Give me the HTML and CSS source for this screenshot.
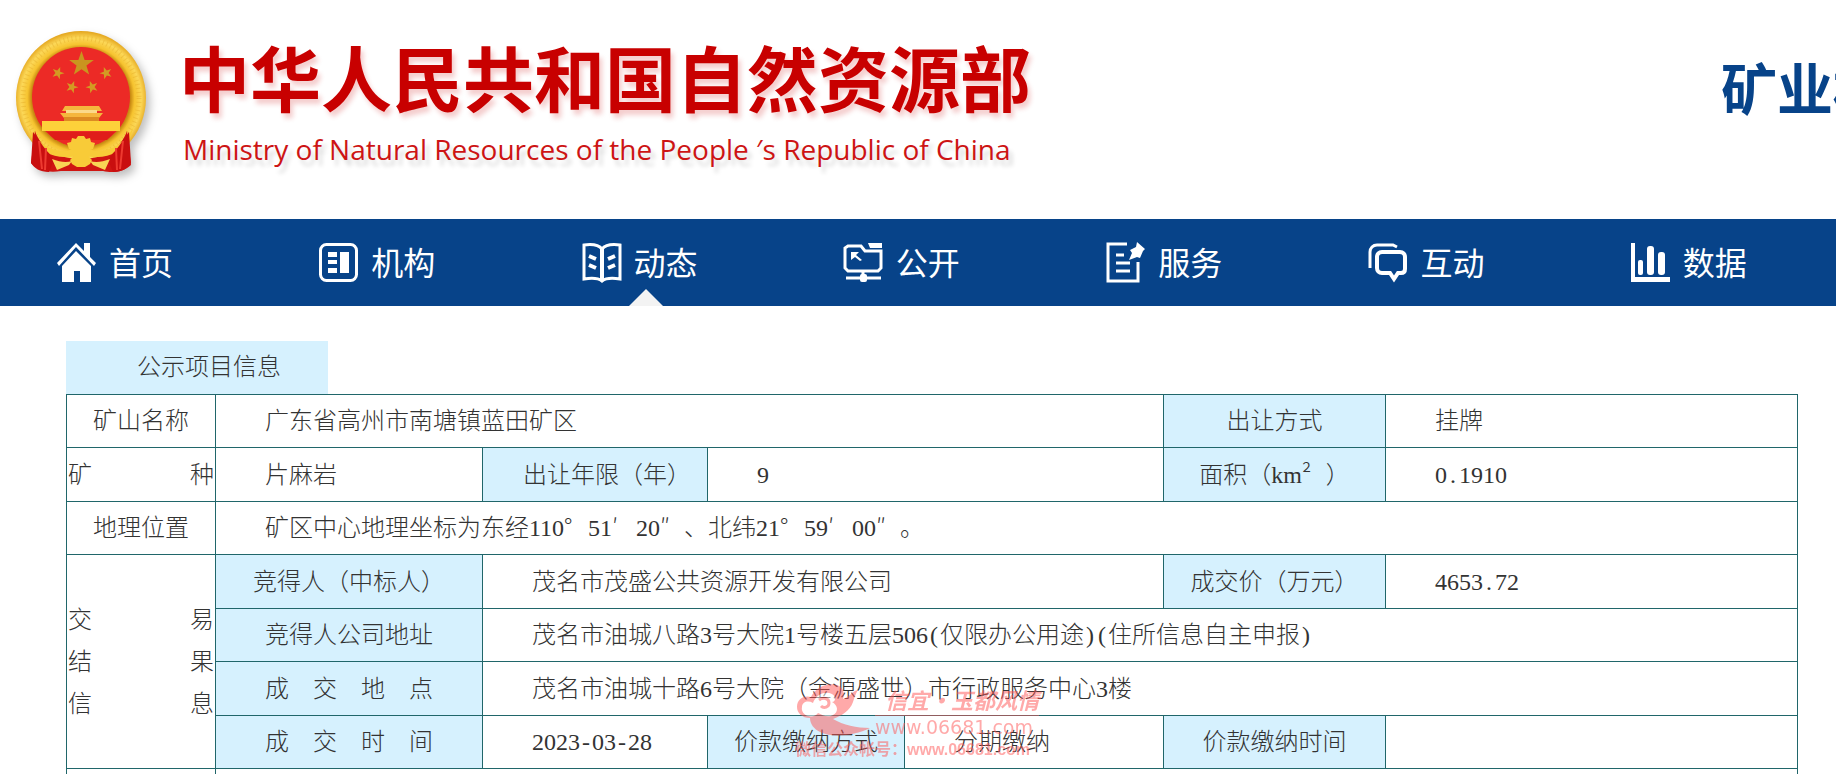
FILE: index.html
```html
<!DOCTYPE html>
<html lang="zh-CN">
<head>
    <meta charset="UTF-8">
    <meta name="viewport" content="width=device-width, initial-scale=1.0">
    <title>中华人民共和国自然资源部</title>
    <link rel="stylesheet" href="styles.css">
</head>
<body>

    <header class="header">
        <svg class="emblem" viewBox="0 0 132 142" aria-hidden="true">
            <defs>
                <radialGradient id="gold" gradientUnits="userSpaceOnUse" cx="66" cy="67" r="67">
                    <stop offset="0.74" stop-color="#c98a12"/>
                    <stop offset="0.8" stop-color="#f6c32f"/>
                    <stop offset="0.9" stop-color="#fcd858"/>
                    <stop offset="1" stop-color="#e3a41c"/>
                </radialGradient>
                <path id="star" d="M0-10 2.4-3.1 9.5-3.1 3.8 1.2 5.9 8.1 0 4 -5.9 8.1 -3.8 1.2 -9.5-3.1 -2.4-3.1z"/>
            </defs>
            <ellipse cx="66" cy="67" rx="65" ry="67" fill="url(#gold)"/>
            <ellipse cx="66" cy="67" rx="58" ry="60" fill="none" stroke="#d99a1a" stroke-width="5" stroke-dasharray="1 3" opacity=".3"/>
            <path d="M20 100C26 118 44 128 66 128s40-10 46-28l4 34c-8 8-20 8-28 6H46c-12 2-22 0-30-8z" fill="#cf1512"/>
            <ellipse cx="66" cy="66" rx="49" ry="50" fill="#ec2a26"/>
            <use href="#star" transform="translate(66.500 33) scale(1.3)" fill="#c9951f"/>
            <g fill="#d39a23">
                <use href="#star" transform="translate(43 42) scale(.65) rotate(20)"/>
                <use href="#star" transform="translate(91 42) scale(.65) rotate(-20)"/>
                <use href="#star" transform="translate(57 56) scale(.65) rotate(20)"/>
                <use href="#star" transform="translate(77 56) scale(.65) rotate(-20)"/>
            </g>
            <path d="M50 75h34l3 5H47zM45 82h43l-4 5H49z" fill="#f5b63d"/>
            <path d="M51 79h31v3H51z" fill="#fbd98a"/>
            <path d="M49 86h35v4H49z" fill="#dc8b22"/>
            <path d="M27 90h78v10H27z" fill="#fdd13a"/>
            <path d="M32 101h68l-8 8H40z" fill="#e01d1a"/>
            <path d="M12 92c8 20 24 29 40 28 5-1 8-5 14-5s9 4 14 5c16 1 32-8 40-28l-5 15c-8 13-20 20-36 19-5 0-8-2-13-2s-8 2-13 2c-16 1-28-6-36-19z" fill="#f8cb38"/>
            <path d="M52 112l4-1 1-4 4 1 2-3h6l2 3 4-1 1 4 4 1-2 6-12 4-12-4z" fill="#f8cb38"/>
            <path d="M18 101l10 14c5 7 12 12 10 16l-4 10c-9 0-15-4-18-9z" fill="#c90f0f"/>
            <path d="M114 101l-10 14c-5 7-12 12-10 16l4 10c9 0 15-4 18-9z" fill="#c90f0f"/>
            <path d="M24 110l3 28M31 117l-1 22M108 110l-3 28M101 117l1 22" stroke="#ee3a30" stroke-width="2" fill="none"/>
            <path d="M55 129l5-5h12l5 5-2 4-5 3h-8l-5-3z" fill="#f8cb38"/>
            <path d="M37 128c8 3 14 4 20 2l-3 4-12 5zM95 128c-8 3-14 4-20 2l3 4 12 5z" fill="#f9d455"/>
        </svg>
        <div class="brand">
            <h1 class="brand-cn">中华人民共和国自然资源部</h1>
            <p class="brand-en">Ministry of Natural Resources of the People ′s Republic of China</p>
        </div>
        <div class="site-title">矿业权市场</div>
    </header>

    <nav class="nav">
        <a class="nav-item" href="#">
            <svg class="nav-icon" viewBox="0 0 39 39" fill="#fff">
                <path d="M19 0 27 8V0h6v14l6 6-2 3L19 4 2 23l-2-3z"/>
                <path d="M19 8 34 23v16H23V28h-6v11H5V23z"/>
            </svg>
            <span class="nav-text">首页</span>
        </a>
        <a class="nav-item" href="#">
            <svg class="nav-icon" viewBox="0 0 39 39" fill="#fff">
                <rect x="1.500" y="1.500" width="36" height="36" rx="6" fill="none" stroke="#fff" stroke-width="3"/>
                <path d="M9 9h9v5H9zM9 17h9v4H9zM9 25h9v5H9zM21 9h9v21h-9z"/>
            </svg>
            <span class="nav-text">机构</span>
        </a>
        <a class="nav-item active" href="#">
            <svg class="nav-icon" viewBox="0 0 39 39" fill="none" stroke="#fff" stroke-width="3">
                <path d="M20 6C16 1 9 1 2 2v34c6-1 13-2 18 2 5-4 12-3 18-2V2C31 1 24 1 20 6z"/>
                <path d="M20 6v32" stroke-width="4"/>
                <path d="M7 13l7 3M7 22l7 3M33 13l-7 3M33 22l-7 3" stroke-width="4"/>
            </svg>
            <span class="nav-text">动态</span>
        </a>
        <a class="nav-item" href="#">
            <svg class="nav-icon" viewBox="0 0 39 39" fill="none" stroke="#fff" stroke-width="3">
                <path d="M4 3h13l4 5h16v17l-3 3H4l-3-3V5z"/>
                <path d="M24 0h14v5H26z" fill="#fff" stroke="none"/>
                <path d="M7 9h8l-3 3 6 5-2 1-5-4-4 3z" fill="#fff" stroke="none"/>
                <path d="M19 28v7M2 35h35"/>
                <rect x="16" y="31" width="7" height="8" rx="2" fill="#fff" stroke="none"/>
            </svg>
            <span class="nav-text">公开</span>
        </a>
        <a class="nav-item" href="#">
            <svg class="nav-icon" viewBox="0 0 39 39" fill="none" stroke="#fff" stroke-width="3">
                <path d="M21 1H2v37h30V19"/>
                <path d="M10 12h8M10 20h14M10 28h14"/>
                <path d="M31 -1l8 7-2 2-3 7-3-1-8 3 3-7-2-3 6-3z" fill="#fff" stroke="none"/>
            </svg>
            <span class="nav-text">服务</span>
        </a>
        <a class="nav-item" href="#">
            <svg class="nav-icon" viewBox="0 0 39 39" fill="none" stroke="#fff" stroke-width="3">
                <path d="M2 25V9c0-4 3-7 7-7h16l4 2"/>
                <path d="M14 9h18c3 0 5 2 5 5v12c0 3-2 4-4 4h-3l-4 6-4-6h-8c-3 0-5-2-5-5V14c0-3 2-5 5-5z" stroke-width="4"/>
            </svg>
            <span class="nav-text">互动</span>
        </a>
        <a class="nav-item" href="#">
            <svg class="nav-icon" viewBox="0 0 39 39" fill="#fff">
                <path d="M0 0h4v34h35v5H0z"/>
                <rect x="7" y="17" width="5" height="15" rx="2"/>
                <rect x="16" y="3" width="7" height="29" rx="3"/>
                <rect x="27" y="9" width="7" height="23" rx="3"/>
            </svg>
            <span class="nav-text">数据</span>
        </a>
    </nav>

    <main class="content">
        <h2 class="tab">公示项目信息</h2>
        <table class="info-table">
            <colgroup>
                <col class="col-name">
                <col class="col-a">
                <col class="col-b">
                <col class="col-c">
                <col class="col-d">
                <col class="col-e">
                <col>
            </colgroup>
            <tr>
                <th class="plain">矿山名称</th>
                <td colspan="4">广东省高州市南塘镇蓝田矿区</td>
                <th>出让方式</th>
                <td>挂牌</td>
            </tr>
            <tr>
                <th class="plain spread">矿 种</th>
                <td>片麻岩</td>
                <th class="shift">出让年限（年）</th>
                <td colspan="2">9</td>
                <th>面积（km<span class="wide">²</span>）</th>
                <td>0<span class="half">.</span>1910</td>
            </tr>
            <tr>
                <th class="plain">地理位置</th>
                <td colspan="6">矿区中心地理坐标为东经110<span class="wide">°</span>51<span class="wide">′</span>20<span class="wide">″</span>、北纬21<span class="wide">°</span>59<span class="wide">′</span>00<span class="wide">″</span>。</td>
            </tr>
            <tr>
                <th class="plain spread" rowspan="4">交 易<br>结 果<br>信 息</th>
                <th>竞得人（中标人）</th>
                <td colspan="3">茂名市茂盛公共资源开发有限公司</td>
                <th>成交价（万元）</th>
                <td>4653<span class="half">.</span>72</td>
            </tr>
            <tr>
                <th>竞得人公司地址</th>
                <td colspan="5">茂名市油城八路3号大院1号楼五层506<span class="half">(</span>仅限办公用途<span class="half">)</span><span class="half">(</span>住所信息自主申报<span class="half">)</span></td>
            </tr>
            <tr>
                <th>成　交　地　点</th>
                <td colspan="5">茂名市油城十路6号大院（金源盛世）市行政服务中心3楼</td>
            </tr>
            <tr>
                <th>成　交　时　间</th>
                <td>2023<span class="half">-</span>03<span class="half">-</span>28</td>
                <th>价款缴纳方式</th>
                <td>分期缴纳</td>
                <th>价款缴纳时间</th>
                <td></td>
            </tr>
            <tr>
                <th class="plain"></th>
                <td colspan="6"></td>
            </tr>
        </table>

        <div class="watermark">
            <div class="wm-top">
                <svg class="wm-logo" viewBox="0 0 80 54" aria-hidden="true">
                    <path d="M2 24c0-8 7-12 14-10 4-9 16-15 26-12 6 2 8 8 6 14 7-2 9-8 15-9-2 3-3 6-5 12-3 9-12 14-20 17 10 6 24 9 37 9-16 8-38 10-50 4-6-3-10-8-10-14C7 35 2 30 2 24z" fill="currentColor"/>
                    <path d="M7 24c0-5 6-7 11-4 2-7 11-13 19-9 4 2 4 8 0 8 6 3 7 10 1 13-5 3-11 0-15-2-2 3-6 4-10 3-4-1-7-5-6-9z" fill="#fff"/>
                    <path d="M24 17c4-3 10-2 10 3 0 4-5 6-8 3" fill="none" stroke="currentColor" stroke-width="3"/>
                </svg>
                <div class="wm-text">
                    <div class="wm-name">信宜·玉都风情</div>
                    <div class="wm-url">www.06681.com</div>
                </div>
            </div>
            <div class="wm-account">微信公众帐号：www.06681.com</div>
        </div>
    </main>

</body>
</html>
```
FILE: styles.css
```css
* {
    box-sizing: border-box;
}

body {
    margin: 0;
    height: 100vh;
    overflow: hidden;
    background-color: #fff;
    font-family: "Liberation Serif", "Noto Sans CJK SC", serif;
    color: #333;
}

.header {
    display: flex;
    height: 219px;
    padding: 31px 0 0 15px;
}

.emblem {
    flex: none;
    width: 132px;
    height: 142px;
    filter: drop-shadow(4px 5px 4px rgba(0, 0, 0, 0.25));
}

.brand {
    margin-left: 32px;
    white-space: nowrap;
}

.brand-cn {
    margin: 0;
    font-family: "Noto Sans CJK SC", sans-serif;
    font-size: 71px;
    font-weight: 700;
    line-height: 88px;
    color: #c80000;
    text-shadow: 3px 5px 5px rgba(200, 0, 0, 0.2);
}

.brand-en {
    margin: 0;
    padding-left: 4px;
    font-family: "Open Sans", "Noto Sans CJK SC", sans-serif;
    font-size: 28px;
    line-height: 60px;
    color: #cd1414;
    text-shadow: 4px 6px 4px rgba(0, 0, 0, 0.15);
}

.site-title {
    width: 115px;
    margin: 20px 0 0 auto;
    overflow: hidden;
    font-family: "Noto Sans CJK SC", sans-serif;
    font-size: 56px;
    font-weight: 700;
    line-height: 70px;
    color: #074389;
    white-space: nowrap;
}

/* 导航 */
.nav {
    display: flex;
    height: 87px;
    background-color: #074389;
}

.nav-item {
    position: relative;
    flex: 1;
    display: flex;
    align-items: center;
    gap: 13px;
    padding-left: 57px;
    font-family: "Noto Sans CJK SC", sans-serif;
    font-size: 32px;
    color: #fff;
    text-decoration: none;
}

.nav-icon {
    width: 39px;
    height: 39px;
    overflow: visible;
}

.nav-text {
    padding-bottom: 4px;
}

.nav-item.active::after {
    content: "";
    position: absolute;
    left: 104px;
    bottom: 0;
    border: 17px solid transparent;
    border-top: 0;
    border-bottom-color: #f3f3f3;
}

/* 公示表格 */
.content {
    position: relative;
    padding: 35px 38px 0 66px;
}

.tab {
    width: 262px;
    margin: 0;
    padding-left: 24px;
    background-color: #d6f1fe;
    font-size: 24px;
    font-weight: 300;
    line-height: 53px;
    text-align: center;
}

.info-table {
    width: 100%;
    table-layout: fixed;
    border-collapse: collapse;
    font-size: 24px;
    font-weight: 300;
    line-height: 42px;
}

.info-table tr {
    height: 53px;
}

.info-table tr:nth-child(even) {
    height: 54px;
}

.info-table th,
.info-table td {
    padding: 0;
    border: 1px solid #20666a;
    font-weight: 300;
    white-space: nowrap;
}

.info-table th {
    background-color: #d6f1fe;
    text-align: center;
}

.info-table td {
    padding-left: 49px;
    text-align: left;
}

.info-table .plain {
    background-color: #fff;
}

.info-table .spread {
    padding: 0 1px;
    text-align: justify;
    text-align-last: justify;
    white-space: normal;
}

.info-table .shift {
    padding-left: 24px;
}

/* 全角、半角符号 */
.wide {
    display: inline-block;
    width: 24px;
    font-family: "Noto Sans CJK SC", sans-serif;
    line-height: 24px;
    text-align: left;
}

.half {
    display: inline-block;
    width: 12px;
    line-height: 24px;
    text-align: center;
}

.col-name { width: 149px; }
.col-a { width: 267px; }
.col-b { width: 225px; }
.col-c { width: 197px; }
.col-d { width: 259px; }
.col-e { width: 222px; }

/* 水印 */
.watermark {
    position: absolute;
    left: 795px;
    top: 377px;
    font-family: "Noto Sans CJK SC", sans-serif;
    color: #f55;
    opacity: 0.5;
    white-space: nowrap;
}

.wm-top {
    display: flex;
}

.wm-logo {
    width: 80px;
    height: 54px;
}

.wm-name {
    padding-left: 10px;
    border-bottom: 1px solid #f55;
    font-size: 22px;
    font-weight: 700;
    font-style: italic;
    line-height: 32px;
}

.wm-url {
    font-family: "DejaVu Sans", sans-serif;
    font-size: 19px;
    line-height: 22px;
}

.wm-account {
    font-family: "Liberation Sans", "Noto Sans CJK SC", sans-serif;
    font-size: 16px;
    font-weight: 700;
    line-height: 24px;
}
```
